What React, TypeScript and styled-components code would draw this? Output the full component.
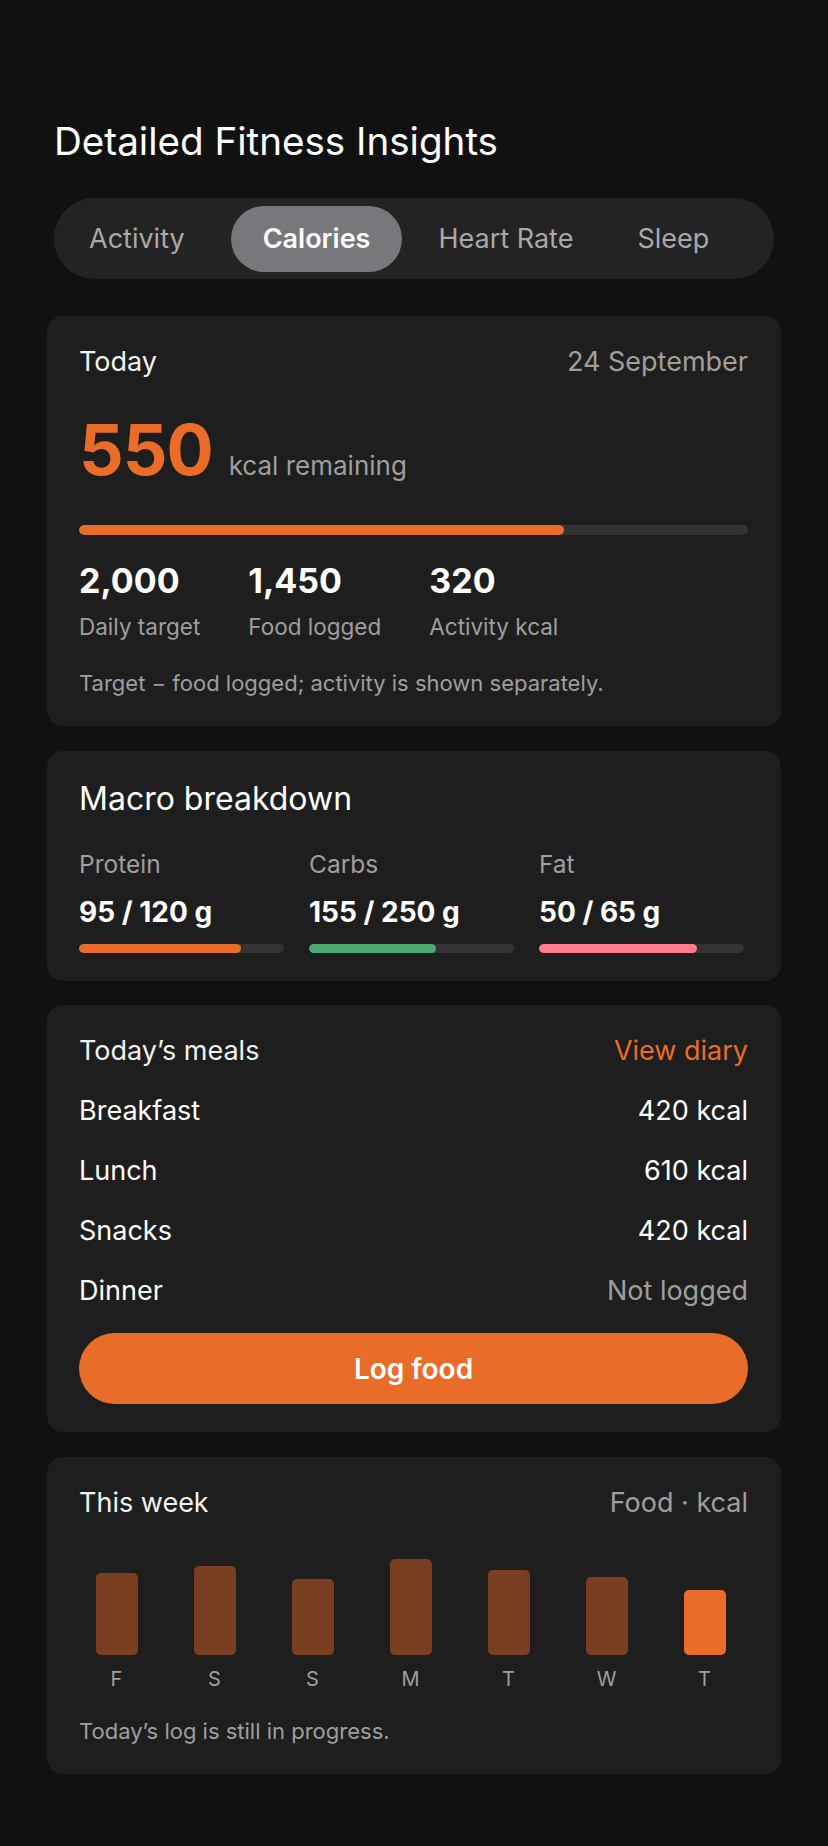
import React from 'react'
import styled, { createGlobalStyle } from 'styled-components'

const GlobalStyle = createGlobalStyle`
	html, body {
		margin: 0;
		padding: 0;
		background: #111111;
	}
	body {
		font-family: Inter, 'Noto Sans', sans-serif;
		color: #ffffff;
		-webkit-font-smoothing: antialiased;
	}
`

const ORANGE = '#e96d28'

const Page = styled.main`
	width: 828px;
	box-sizing: border-box;
	padding: 118px 47px 72px;
	display: flex;
	flex-direction: column;
`

const Header = styled.header`
	padding: 0 7px;
	display: flex;
	flex-direction: column;
	gap: 34px;
	margin-bottom: 37px;
`

const Title = styled.h1`
	margin: 0;
	font-size: 38.6px;
	line-height: 46px;
	font-weight: 400;
`

const TabBar = styled.nav`
	display: flex;
	align-items: center;
	gap: 8px;
	height: 81px;
	box-sizing: border-box;
	padding: 7px;
	border-radius: 41px;
	background: #232323;
`

const Tab = styled.div<{ $active?: boolean }>`
	height: 66px;
	display: flex;
	align-items: center;
	padding: 0 ${(p) => (p.$active ? 32 : 28)}px;
	margin-left: ${(p) => (p.$active ? 10 : 0)}px;
	border-radius: 33px;
	font-size: 27px;
	font-weight: ${(p) => (p.$active ? 600 : 400)};
	color: ${(p) => (p.$active ? '#ffffff' : '#a9a9a9')};
	background: ${(p) => (p.$active ? '#78777c' : 'transparent')};
`

const Cards = styled.div`
	display: flex;
	flex-direction: column;
	gap: 24.5px;
`

const Card = styled.section`
	background: #1e1e1e;
	border-radius: 16px;
	padding: 28px 33px 28px 32px;
	display: flex;
	flex-direction: column;
`

const Row = styled.div`
	display: flex;
	justify-content: space-between;
	align-items: center;
`

const CardLabel = styled.span`
	font-size: 27px;
	line-height: 36px;
	color: #f2f2f2;
`

const Muted = styled.span<{ $accent?: boolean }>`
	font-size: 27px;
	line-height: 36px;
	color: ${(p) => (p.$accent ? ORANGE : '#9f9f9f')};
`

const Remaining = styled.div`
	display: flex;
	align-items: baseline;
	gap: 16px;
	margin-top: 30px;
`

const BigNumber = styled.span`
	font-size: 70px;
	line-height: 80px;
	font-weight: 700;
	color: ${ORANGE};
	letter-spacing: -1px;
`

const Unit = styled.span`
	font-size: 26px;
	line-height: 36px;
	color: #9f9f9f;
`

const Track = styled.div<{ $height: number }>`
	height: ${(p) => p.$height}px;
	border-radius: ${(p) => p.$height / 2}px;
	background: #333333;
	overflow: hidden;
`

const Fill = styled.div<{ $color: string }>`
	height: 100%;
	border-radius: inherit;
	background: ${(p) => p.$color};
`

const MainTrack = styled(Track)`
	margin-top: 35px;
`

const Stats = styled.div`
	display: flex;
	gap: 48px;
	margin-top: 26px;
`

const Stat = styled.div`
	display: flex;
	flex-direction: column;
	gap: 11px;
`

const StatValue = styled.span`
	font-size: 34px;
	line-height: 40px;
	font-weight: 700;
`

const StatLabel = styled.span`
	font-size: 22.5px;
	line-height: 30px;
	color: #9f9f9f;
`

const Note = styled.p<{ $top: number }>`
	margin: ${(p) => p.$top}px 0 0;
	font-size: 22px;
	line-height: 30px;
	color: #9f9f9f;
`

const SectionTitle = styled.h2`
	margin: 0;
	font-size: 32px;
	line-height: 40px;
	font-weight: 400;
`

const Macros = styled.div`
	display: grid;
	grid-template-columns: repeat(3, 1fr);
	gap: 25px;
	padding-right: 4px;
	margin-top: 29px;
`

const Macro = styled.div`
	display: flex;
	flex-direction: column;
`

const MacroName = styled.span`
	font-size: 24.5px;
	line-height: 32px;
	color: #9f9f9f;
`

const MacroValue = styled.span`
	font-size: 28px;
	line-height: 34px;
	font-weight: 700;
	margin-top: 15px;
	margin-bottom: 15px;
`

const MealList = styled.div`
	display: flex;
	flex-direction: column;
	gap: 24px;
	margin-top: 24px;
`

const MealName = styled.span`
	font-size: 27px;
	line-height: 36px;
`

const MealValue = styled.span<{ $empty?: boolean }>`
	font-size: 27px;
	line-height: 36px;
	color: ${(p) => (p.$empty ? '#9f9f9f' : '#ffffff')};
`

const Button = styled.button`
	margin-top: 24px;
	height: 71px;
	border: 0;
	border-radius: 36px;
	background: ${ORANGE};
	color: #ffffff;
	font-family: inherit;
	font-size: 28px;
	font-weight: 600;
`

const Chart = styled.div`
	display: grid;
	grid-template-columns: repeat(7, 1fr);
	column-gap: 17px;
	margin: 24px 3px 0 -3px;
`

const Day = styled.div`
	display: flex;
	flex-direction: column;
	align-items: center;
`

const BarSlot = styled.div`
	height: 110px;
	display: flex;
	align-items: flex-end;
`

const Bar = styled.div<{ $today?: boolean }>`
	width: 42px;
	border-radius: 5px;
	background: ${(p) => (p.$today ? ORANGE : '#7a3f21')};
`

const DayLabel = styled.span`
	margin-top: 10px;
	font-size: 20px;
	line-height: 28px;
	color: #9f9f9f;
`

const tabs = ['Activity', 'Calories', 'Heart Rate', 'Sleep']

const macros = [
	{ name: 'Protein', value: '95 / 120 g', pct: 95 / 120, color: ORANGE },
	{ name: 'Carbs', value: '155 / 250 g', pct: 155 / 250, color: '#4caa73' },
	{ name: 'Fat', value: '50 / 65 g', pct: 50 / 65, color: '#ff7d8b' },
]

const meals = [
	{ name: 'Breakfast', kcal: '420 kcal' },
	{ name: 'Lunch', kcal: '610 kcal' },
	{ name: 'Snacks', kcal: '420 kcal' },
	{ name: 'Dinner', kcal: null },
]

const week = [
	{ day: 'F', h: 82 },
	{ day: 'S', h: 89 },
	{ day: 'S', h: 76 },
	{ day: 'M', h: 96 },
	{ day: 'T', h: 85 },
	{ day: 'W', h: 78 },
	{ day: 'T', h: 65, today: true },
]

export default function App() {
	return (
		<>
			<GlobalStyle />
			<Page>
				<Header>
					<Title>Detailed Fitness Insights</Title>
					<TabBar>
						{tabs.map((t) => (
							<Tab key={t} $active={t === 'Calories'}>
								{t}
							</Tab>
						))}
					</TabBar>
				</Header>

				<Cards>
					<Card>
						<Row>
							<CardLabel>Today</CardLabel>
							<Muted>24 September</Muted>
						</Row>
						<Remaining>
							<BigNumber>550</BigNumber>
							<Unit>kcal remaining</Unit>
						</Remaining>
						<MainTrack $height={10}>
							<Fill $color={ORANGE} style={{ width: `${(1450 / 2000) * 100}%` }} />
						</MainTrack>
						<Stats>
							<Stat>
								<StatValue>2,000</StatValue>
								<StatLabel>Daily target</StatLabel>
							</Stat>
							<Stat>
								<StatValue>1,450</StatValue>
								<StatLabel>Food logged</StatLabel>
							</Stat>
							<Stat>
								<StatValue>320</StatValue>
								<StatLabel>Activity kcal</StatLabel>
							</Stat>
						</Stats>
						<Note $top={26}>Target − food logged; activity is shown separately.</Note>
					</Card>

					<Card>
						<SectionTitle>Macro breakdown</SectionTitle>
						<Macros>
							{macros.map((m) => (
								<Macro key={m.name}>
									<MacroName>{m.name}</MacroName>
									<MacroValue>{m.value}</MacroValue>
									<Track $height={9}>
										<Fill $color={m.color} style={{ width: `${m.pct * 100}%` }} />
									</Track>
								</Macro>
							))}
						</Macros>
					</Card>

					<Card>
						<Row>
							<CardLabel>Today’s meals</CardLabel>
							<Muted $accent>View diary</Muted>
						</Row>
						<MealList>
							{meals.map((m) => (
								<Row key={m.name}>
									<MealName>{m.name}</MealName>
									<MealValue $empty={!m.kcal}>{m.kcal ?? 'Not logged'}</MealValue>
								</Row>
							))}
						</MealList>
						<Button>Log food</Button>
					</Card>

					<Card>
						<Row>
							<CardLabel>This week</CardLabel>
							<Muted>Food · kcal</Muted>
						</Row>
						<Chart>
							{week.map((d, i) => (
								<Day key={i}>
									<BarSlot>
										<Bar $today={d.today} style={{ height: d.h }} />
									</BarSlot>
									<DayLabel>{d.day}</DayLabel>
								</Day>
							))}
						</Chart>
						<Note $top={23}>Today’s log is still in progress.</Note>
					</Card>
				</Cards>
			</Page>
		</>
	)
}
